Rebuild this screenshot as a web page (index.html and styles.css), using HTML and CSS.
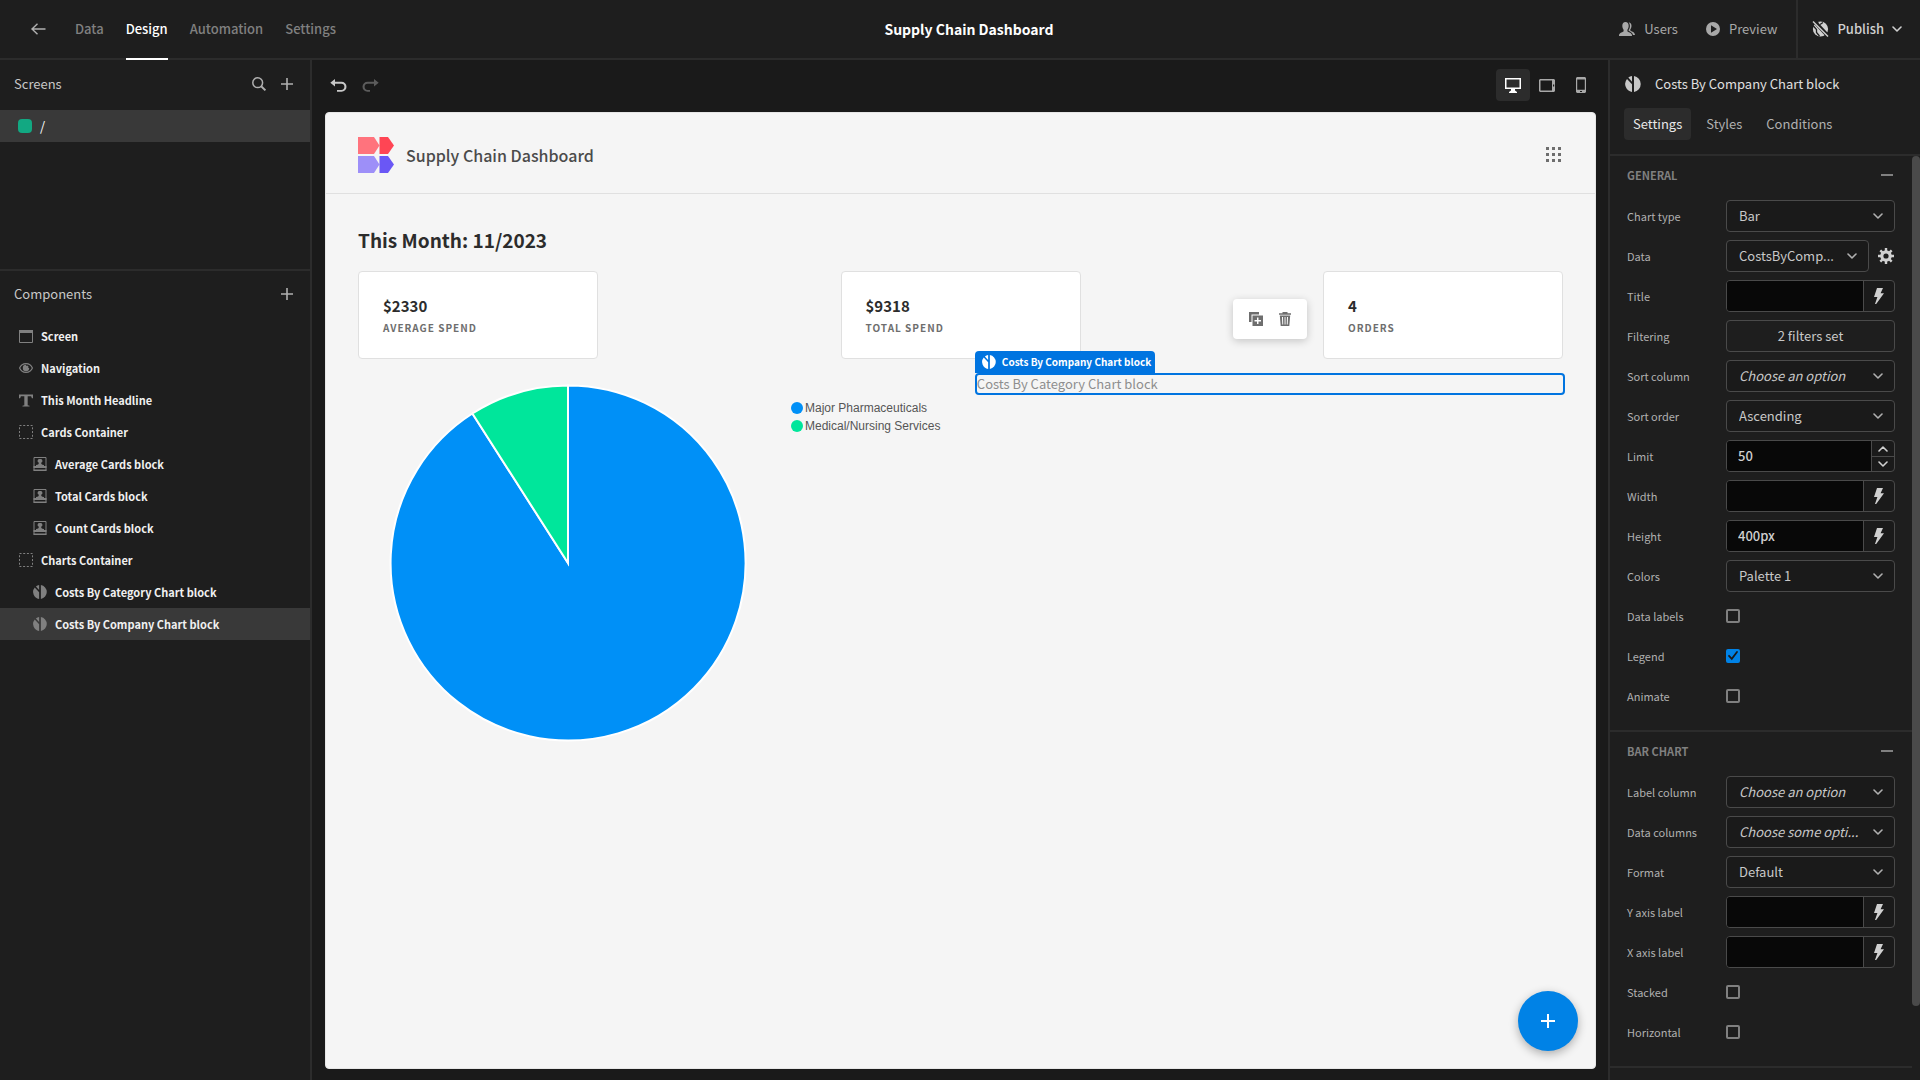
FILE: index.html
```html
<!DOCTYPE html>
<html lang="en">
<head>
<meta charset="utf-8">
<title>Supply Chain Dashboard</title>
<link rel="stylesheet" href="styles.css">
</head>
<body>
<svg class="sprite" aria-hidden="true">
  <symbol id="donut" viewBox="0 0 16 16"><path d="M9 .1A8 8 0 0 1 9 15.900Z"/><path d="M7 .1A8 8 0 0 0 3.300 1.600L7 5.800Z"/><path d="M2 2.900A8 8 0 0 0 7 15.900V8.300Z"/></symbol>
  <symbol id="chevron" viewBox="0 0 10 6"><path d="M1 1l4 4 4-4" fill="none" stroke="currentColor" stroke-width="1.600" stroke-linecap="round" stroke-linejoin="round"/></symbol>
  <symbol id="plus" viewBox="0 0 12 12"><path d="M5.200 0h1.600v5.200H12v1.600H6.800V12H5.200V6.800H0V5.200h5.200z"/></symbol>
  <symbol id="bolt" viewBox="0 0 10 16"><path d="M3 0h6L6.600 5.200H10L2.200 16H1l2.400-7H0z"/></symbol>
  <symbol id="box" viewBox="0 0 14 14"><path d="M.5.5h13v13H.5z" fill="none" stroke="currentColor" stroke-dasharray="2 1.710"/></symbol>
  <symbol id="card" viewBox="0 0 13 14"><path d="M.5.5h12v13H.5z" fill="none" stroke="currentColor"/><path d="M6.500 2a2 2 0 0 1 1.200 3.800c0 1.400.3 1.900 2.800 2.300V9.500h-8V8.100c2.500-.4 2.800-.9 2.800-2.300A2 2 0 0 1 6.500 2z"/><path d="M0 9h13v2H0zM0 12.500h13V14H0z"/></symbol>
</svg>
<div class="app">
  <header class="topbar">
    <nav class="topnav">
      <a href="#" class="back" aria-label="Back"><svg width="15" height="12" viewBox="0 0 15 12"><path d="M6.500.7L1 6l5.500 5.300M1 6h13.500" fill="none" stroke="currentColor" stroke-width="1.400"/></svg></a>
      <a href="#">Data</a>
      <a href="#" class="active">Design</a>
      <a href="#">Automation</a>
      <a href="#">Settings</a>
    </nav>
    <h1>Supply Chain Dashboard</h1>
    <div class="actions">
      <button class="action"><svg width="16" height="15" viewBox="0 0 16 15"><path d="M6.500 0c2 0 3.200 1.600 3.200 3.800 0 1.700-.6 3-1.300 3.900v1.500c0 .9 4.600 1.200 4.600 4.300v.5H0v-.5c0-3.100 4.600-3.400 4.600-4.300V7.700C3.900 6.800 3.300 5.500 3.300 3.800 3.300 1.600 4.500 0 6.500 0z"/><path d="M9.600.2c2 .2 2.900 1.700 2.900 3.500 0 1.500-.5 2.800-1.200 3.600v1.200c.2.800 4.700 1.200 4.700 4.500h-2c-.4-2.400-2.600-3-4.400-4.200V7.900c.8-1 1.300-2.400 1.300-4 0-1.400-.4-2.700-1.300-3.700z"/></svg>Users</button>
      <button class="action"><svg width="14" height="14" viewBox="0 0 14 14"><path fill-rule="evenodd" d="M7 0a7 7 0 1 0 0 14A7 7 0 0 0 7 0zM5 3.300L11 7l-6 3.700z"/></svg>Preview</button>
      <button class="publish"><svg width="17" height="16" viewBox="0 0 17 16"><circle cx="8.500" cy="8" r="7.600"/><path d="M1 4.500l3.500 4v3l3 3.500M6 1l-1 3 3 2M11 1.500l-3 2" fill="none" stroke="#1e1e1e" stroke-width="1.300"/><path d="M1.500-.5l15 16" stroke="#1e1e1e" stroke-width="4"/><path d="M1 .5l15 15" stroke="currentColor" stroke-width="1.400"/></svg>Publish<svg width="10" height="6"><use href="#chevron"/></svg></button>
    </div>
  </header>

  <aside class="sidebar">
    <section class="screens">
      <div class="side-head"><h2>Screens</h2>
        <button aria-label="Search"><svg width="14" height="14" viewBox="0 0 14 14"><g fill="none" stroke="currentColor"><circle cx="5.700" cy="5.700" r="4.900" stroke-width="1.500"/><path d="M9.200 9.200l4.200 4.200" stroke-width="2"/></g></svg></button>
        <button aria-label="Add screen"><svg width="12" height="12"><use href="#plus"/></svg></button>
      </div>
      <a href="#" class="screen-row"><span class="swatch"></span>/</a>
    </section>
    <section>
      <div class="side-head"><h2>Components</h2>
        <button aria-label="Add component"><svg width="12" height="12"><use href="#plus"/></svg></button>
      </div>
      <ul class="tree">
        <li><svg width="14" height="13" viewBox="0 0 14 13"><path d="M.5.5h13v12H.5z" fill="none" stroke="currentColor"/><path d="M0 0h14v3H0z"/></svg>Screen</li>
        <li><svg width="14" height="10" viewBox="0 0 14 10"><path d="M.6 5C3-.8 11-.8 13.400 5 11 10.800 3 10.800.6 5z" fill="none" stroke="currentColor" stroke-width="1.200"/><path d="M7 1.800A3.200 3.200 0 1 0 10.200 5H7z"/><circle cx="8" cy="4" r="1.500"/></svg>Navigation</li>
        <li><svg width="14" height="13" viewBox="0 0 15 13"><path d="M0 0h15v4h-1.200L13 2H9.300v9.500l2 .5v1H3.700v-1l2-.5V2H2l-.8 2H0z"/></svg>This Month Headline</li>
        <li><svg width="14" height="14"><use href="#box"/></svg>Cards Container</li>
        <li class="child"><svg width="14" height="14"><use href="#card"/></svg>Average Cards block</li>
        <li class="child"><svg width="14" height="14"><use href="#card"/></svg>Total Cards block</li>
        <li class="child"><svg width="14" height="14"><use href="#card"/></svg>Count Cards block</li>
        <li><svg width="14" height="14"><use href="#box"/></svg>Charts Container</li>
        <li class="child"><svg width="14" height="14"><use href="#donut"/></svg>Costs By Category Chart block</li>
        <li class="child selected"><svg width="14" height="14"><use href="#donut"/></svg>Costs By Company Chart block</li>
      </ul>
    </section>
  </aside>

  <main class="stage">
    <div class="toolbar">
      <button class="undo" aria-label="Undo"><svg width="16" height="13" viewBox="0 0 16 13"><path d="M5 0v2.700h6.500a4.500 4.500 0 0 1 0 10H7v-1.800h4.300a2.900 2.900 0 0 0 0-6.200H5v2.800L.3 3.700z"/></svg></button>
      <button class="redo" aria-label="Redo"><svg width="16" height="13" viewBox="0 0 16 13"><path d="M11 0v2.700H4.500a4.500 4.500 0 0 0 0 10H7v-1.800H4.700a2.900 2.900 0 0 1 0-6.200H11v2.800l4.700-3.800z"/></svg></button>
      <div class="devices">
        <button class="on" aria-label="Desktop"><svg width="16" height="15" viewBox="0 0 16 15"><path fill-rule="evenodd" d="M0 0h16v11h-6v1.500l2 1.500v1H4v-1l2-1.500V11H0zM1.500 1.500v8h13v-8z"/></svg></button>
        <button aria-label="Tablet"><svg width="16" height="13" viewBox="0 0 16 13"><path fill-rule="evenodd" d="M1 0h14l1 1v11l-1 1H1l-1-1V1zM1.500 1.500v10H13v-10zM14 5.500v2h1.200v-2z"/></svg></button>
        <button aria-label="Mobile"><svg width="10" height="16" viewBox="0 0 10 16"><path fill-rule="evenodd" d="M1 0h8l1 1v14l-1 1H1l-1-1V1zM1.200 2.500v10.300h7.600V2.500zM4 14h2v1H4z"/></svg></button>
      </div>
    </div>
    <div class="canvas">
      <header class="app-head">
        <svg width="36" height="36" viewBox="0 0 36 36"><path fill="#ff737d" d="M0 0h16l5.500 8.500L16 17H0z"/><path fill="#ff4554" d="M21.500 0H30l6 8.500-6 8.500h-8.500z"/><path fill="#9d8ff8" d="M0 19h16l5.500 8.500L16 36H0z"/><path fill="#6a57f5" d="M21.500 19H30l6 8.500-6 8.500h-8.500z"/></svg>
        <h2>Supply Chain Dashboard</h2>
        <button aria-label="Apps"><svg width="15" height="15" viewBox="0 0 15 15"><path d="M0 0h3v3H0zM6 0h3v3H6zM12 0h3v3h-3zM0 6h3v3H0zM6 6h3v3H6zM12 6h3v3h-3zM0 12h3v3H0zM6 12h3v3H6zM12 12h3v3h-3z"/></svg></button>
      </header>
      <div class="page">
        <h3>This Month: 11/2023</h3>
        <div class="cards">
          <div class="card"><strong>$2330</strong><span>AVERAGE SPEND</span></div>
          <div class="card"><strong>$9318</strong><span>TOTAL SPEND</span></div>
          <div class="card"><strong>4</strong><span>ORDERS</span></div>
        </div>
        <div class="charts">
          <div class="chart">
            <svg width="420" height="370" viewBox="0 0 420 370"><g stroke="#fff" stroke-width="2"><path fill="#0090f7" d="M210 188V10.500A177.500 177.500 0 1 1 114.400 38.500Z"/><path fill="#00e69b" d="M210 188L114.400 38.500A177.500 177.500 0 0 1 210 10.500Z"/></g></svg>
            <ul class="legend"><li class="blue">Major Pharmaceuticals</li><li class="green">Medical/Nursing Services</li></ul>
          </div>
          <div class="placeholder">Costs By Category Chart block
            <div class="tag"><svg width="14" height="14"><use href="#donut"/></svg>Costs By Company Chart block</div>
            <div class="tools">
              <button aria-label="Duplicate"><svg width="14" height="14" viewBox="0 0 14 14"><path d="M0 0h10v2.500H2.500V10H0z"/><path fill-rule="evenodd" d="M3.500 3.500H14V14H3.500zM8 5.500V8H5.500v1.500H8V12h1.500V9.500H12V8H9.500V5.500z"/></svg></button>
              <button aria-label="Delete"><svg width="12" height="14" viewBox="0 0 12 14"><path d="M3.500 0h5v1.300H12v1.500H0V1.300h3.500z"/><path fill-rule="evenodd" d="M.8 3.500h10.400L10.300 14H1.700zM3 5l.3 7.500h.9L4 5zM5.600 5v7.500h.9V5zM8 5l-.2 7.500h.9L9 5z"/></svg></button>
            </div>
          </div>
        </div>
      </div>
      <button class="fab" aria-label="Add"><svg width="14" height="14" viewBox="0 0 14 14"><path d="M7 0v14M0 7h14" stroke="currentColor" stroke-width="2"/></svg></button>
    </div>
  </main>

  <aside class="panel">
    <div class="panel-head">
      <h2><svg width="16" height="16"><use href="#donut"/></svg>Costs By Company Chart block</h2>
      <nav class="tabs"><button class="on">Settings</button><button>Styles</button><button>Conditions</button></nav>
    </div>
    <div class="scroll">
      <section class="group">
        <h3>GENERAL<button aria-label="Collapse General"></button></h3>
        <div class="field"><label for="f1">Chart type</label><div class="select"><select id="f1"><option>Bar</option></select><svg width="10" height="6"><use href="#chevron"/></svg></div></div>
        <div class="field"><label for="f2">Data</label><div class="with-gear"><div class="select"><select id="f2"><option>CostsByComp...</option></select><svg width="10" height="6"><use href="#chevron"/></svg></div>
          <button class="gear" aria-label="Configure data"><svg width="16" height="16" viewBox="0 0 16 16"><path fill="none" stroke="currentColor" stroke-width="2.400" d="M8 0v4M8 12v4M0 8h4M12 8h4M2.300 2.300l2.800 2.800M10.900 10.900l2.800 2.800M2.300 13.700l2.800-2.800M10.900 5.100l2.800-2.800"/><circle cx="8" cy="8" r="4.200" fill="none" stroke="currentColor" stroke-width="3.200"/></svg></button></div></div>
        <div class="field"><label for="f3">Title</label><div class="bind"><input id="f3" type="text"><button aria-label="Bind title"><svg width="10" height="16"><use href="#bolt"/></svg></button></div></div>
        <div class="field"><span>Filtering</span><button class="wide">2 filters set</button></div>
        <div class="field"><label for="f4">Sort column</label><div class="select empty"><select id="f4"><option>Choose an option</option></select><svg width="10" height="6"><use href="#chevron"/></svg></div></div>
        <div class="field"><label for="f5">Sort order</label><div class="select"><select id="f5"><option>Ascending</option></select><svg width="10" height="6"><use href="#chevron"/></svg></div></div>
        <div class="field"><label for="f6">Limit</label><div class="bind stepper"><input id="f6" type="text" value="50"><div class="steps"><button aria-label="Increase"><svg class="up" width="10" height="6"><use href="#chevron"/></svg></button><button aria-label="Decrease"><svg width="10" height="6"><use href="#chevron"/></svg></button></div></div></div>
        <div class="field"><label for="f7">Width</label><div class="bind"><input id="f7" type="text"><button aria-label="Bind width"><svg width="10" height="16"><use href="#bolt"/></svg></button></div></div>
        <div class="field"><label for="f8">Height</label><div class="bind"><input id="f8" type="text" value="400px"><button aria-label="Bind height"><svg width="10" height="16"><use href="#bolt"/></svg></button></div></div>
        <div class="field"><label for="f9">Colors</label><div class="select"><select id="f9"><option>Palette 1</option></select><svg width="10" height="6"><use href="#chevron"/></svg></div></div>
        <div class="field"><label for="f10">Data labels</label><input id="f10" type="checkbox"></div>
        <div class="field"><label for="f11">Legend</label><span class="check"><input id="f11" type="checkbox" checked><svg width="10" height="9" viewBox="0 0 10 9"><path d="M1 4.800l2.800 3L9 1" fill="none" stroke="#1a1a1a" stroke-width="1.800" stroke-linecap="round"/></svg></span></div>
        <div class="field"><label for="f12">Animate</label><input id="f12" type="checkbox"></div>
      </section>
      <section class="group">
        <h3>BAR CHART<button aria-label="Collapse Bar chart"></button></h3>
        <div class="field"><label for="g1">Label column</label><div class="select empty"><select id="g1"><option>Choose an option</option></select><svg width="10" height="6"><use href="#chevron"/></svg></div></div>
        <div class="field"><label for="g2">Data columns</label><div class="select empty"><select id="g2"><option>Choose some opti...</option></select><svg width="10" height="6"><use href="#chevron"/></svg></div></div>
        <div class="field"><label for="g3">Format</label><div class="select"><select id="g3"><option>Default</option></select><svg width="10" height="6"><use href="#chevron"/></svg></div></div>
        <div class="field"><label for="g4">Y axis label</label><div class="bind"><input id="g4" type="text"><button aria-label="Bind Y axis label"><svg width="10" height="16"><use href="#bolt"/></svg></button></div></div>
        <div class="field"><label for="g5">X axis label</label><div class="bind"><input id="g5" type="text"><button aria-label="Bind X axis label"><svg width="10" height="16"><use href="#bolt"/></svg></button></div></div>
        <div class="field"><label for="g6">Stacked</label><input id="g6" type="checkbox"></div>
        <div class="field"><label for="g7">Horizontal</label><input id="g7" type="checkbox"></div>
      </section>
      <div class="thumb"></div>
    </div>
  </aside>
</div>
</body>
</html>
```
FILE: styles.css
```css
*, *::before, *::after { box-sizing: border-box; }
body {
  margin: 0;
  background: #1a1a1a;
  color: #c8c8c8;
  font-family: "Noto Sans CJK KR", "Noto Sans", sans-serif;
  font-size: 13px;
  line-height: 20px;
}
h1, h2, h3, ul { margin: 0; padding: 0; font-size: inherit; font-weight: 500; }
li { list-style: none; }
a { color: inherit; text-decoration: none; }
button, input, select { font: inherit; color: inherit; background: none; border: 0; padding: 0; margin: 0; }
svg { fill: currentColor; flex: none; display: block; overflow: visible; }
.sprite { position: absolute; width: 0; height: 0; }

.app {
  display: grid;
  grid-template: 60px minmax(0, 1fr) / 312px minmax(0, 1fr) 312px;
  height: 100vh;
  overflow: hidden;
}

/* Top bar */
.topbar {
  grid-column: 1 / -1;
  display: grid;
  grid-template-columns: 1fr auto 1fr;
  background: #1e1e1e;
  border-bottom: 2px solid #2c2c2c;
}
.topbar h1 { align-self: center; padding-left: 18px; color: #fff; font-size: 14px; font-weight: 700; }
.topnav { display: flex; gap: 22px; padding-left: 31px; font-weight: 500; color: #808080; }
.topnav a { display: flex; align-items: center; margin-bottom: -2px; padding-bottom: 2px; }
.topnav .back { color: #b0b0b0; margin-right: 7px; }
.topnav .active { color: #fff; border-bottom: 2px solid #fff; padding-bottom: 0; }
.actions { display: flex; justify-content: flex-end; color: #a8a8a8; }
.action { display: flex; align-items: center; gap: 9px; margin-right: 28px; }
.action + .action { margin-right: 19px; }
.publish { display: flex; align-items: center; gap: 8px; padding: 0 18px 0 14px; border-left: 2px solid #2c2c2c; color: #d0d0d0; font-weight: 500; }

/* Left sidebar */
.sidebar { background: #1e1e1e; border-right: 2px solid #2c2c2c; }
.side-head { display: flex; align-items: center; gap: 15px; height: 49px; padding: 0 17px 3px 14px; }
.side-head h2 { flex: 1; font-weight: 400; }
.side-head button { color: #b0b0b0; }
.screens { height: 211px; border-bottom: 2px solid #2c2c2c; }
.screens .side-head { height: 50px; padding-bottom: 2px; }
.screen-row { display: flex; align-items: center; gap: 8px; height: 32px; padding-left: 18px; background: #393939; color: #fff; }
.swatch { width: 14px; height: 14px; border-radius: 4px; background: #12a882; }
.tree li { display: flex; align-items: center; gap: 8px; height: 32px; padding-left: 19px; color: #f0f0f0; font-size: 11px; font-weight: 700; }
.tree .child { padding-left: 33px; }
.tree .selected { background: #393939; }
.tree svg { color: #808080; }

/* Stage */
.stage { display: flex; flex-direction: column; padding: 0 12px 11px 13px; }
.toolbar { display: flex; align-items: center; gap: 17px; height: 52px; padding: 0 0 2px 5px; }
.redo { color: #5c5c5c; }
.devices { display: flex; margin-left: auto; margin-right: -2px; }
.devices button { display: flex; align-items: center; justify-content: center; width: 34px; height: 32px; border-radius: 4px; color: #a8a8a8; }
.devices .on { background: #2c2c2c; color: #fff; }
.canvas { position: relative; flex: 1; background: #f5f5f5; border: 1px solid #e6e6e6; border-radius: 4px; color: #2c2c2c; }
.app-head { display: flex; align-items: center; gap: 12px; height: 81px; padding: 3px 34px 0 32px; border-bottom: 1px solid #e0e0e0; }
.app-head h2 { flex: 1; font-size: 16px; font-weight: 500; color: #4b4b4b; }
.app-head button { color: #6e6e6e; }
.page { padding: 32px; }
.page h3 { font-size: 19px; line-height: 28px; font-weight: 700; margin-bottom: 17px; }
.cards { display: flex; justify-content: space-between; margin-bottom: 16px; }
.card { display: flex; flex-direction: column; justify-content: center; gap: 2px; width: 240px; height: 88px; padding: 4px 0 0 24px; background: #fff; border: 1px solid #e0e0e0; border-radius: 4px; }
.card strong { font-size: 15px; font-weight: 700; }
.card span { font-size: 10px; font-weight: 700; letter-spacing: 1px; color: #6e6e6e; }
.charts { display: grid; grid-template-columns: 36fr 35fr; gap: 16px; align-items: start; }
.chart { display: flex; gap: 13px; }
.legend { padding-top: 24px; font: 12px/18px "Liberation Sans", Arial, sans-serif; color: #555; }
.legend li { display: flex; align-items: center; gap: 2px; white-space: nowrap; }
.legend li::before { content: ""; width: 12px; height: 12px; border-radius: 50%; background: #0090f7; }
.legend .green::before { background: #00e69b; }
.placeholder { position: relative; height: 18px; line-height: 18px; color: #8e8e8e; outline: 2px solid #0074e0; border-radius: 2px; }
.tag { position: absolute; left: -2px; bottom: 20px; display: flex; align-items: center; gap: 6px; height: 22px; padding: 0 4px 0 7px; border-radius: 4px 4px 0 0; background: #0074e0; color: #fff; font-size: 10px; font-weight: 700; white-space: nowrap; }
.tools { position: absolute; right: 256px; bottom: 54px; display: flex; align-items: center; justify-content: center; gap: 16px; width: 74px; height: 40px; background: #fff; border-radius: 4px; color: #6e6e6e; box-shadow: 0 2px 8px rgba(0, 0, 0, .2); }
.fab { position: absolute; right: 17px; bottom: 17px; display: flex; align-items: center; justify-content: center; width: 60px; height: 60px; border-radius: 50%; background: #0082e6; color: #fff; box-shadow: 0 3px 10px rgba(0, 0, 0, .3); }

/* Settings panel */
.panel { display: flex; flex-direction: column; min-height: 0; background: #1e1e1e; border-left: 2px solid #2c2c2c; }
.panel-head { height: 96px; padding: 14px; border-bottom: 2px solid #2c2c2c; }
.panel-head h2 { display: flex; align-items: center; gap: 14px; height: 20px; margin-bottom: 14px; font-weight: 400; color: #e0e0e0; }
.panel-head h2 svg { margin-left: 1px; color: #c8c8c8; }
.tabs { display: flex; gap: 6px; color: #b0b0b0; }
.tabs button { height: 32px; padding: 0 9px; border-radius: 4px; }
.tabs .on { background: #2c2c2c; color: #e8e8e8; }
.scroll { position: relative; flex: 1; overflow: hidden; padding-right: 8px; }
.group { display: flex; flex-direction: column; gap: 8px; padding: 0 17px 18px; border-bottom: 2px solid #2c2c2c; }
.group h3 { display: flex; align-items: center; justify-content: space-between; height: 36px; padding-top: 2px; font-size: 11px; font-weight: 700; color: #808080; }
.group h3 button { width: 12px; height: 2px; margin-right: 2px; background: #808080; }
.field { display: grid; grid-template-columns: 99px minmax(0, 1fr); align-items: center; height: 32px; font-size: 11px; color: #b0b0b0; }
.select { position: relative; }
.select select { display: block; width: 100%; height: 32px; padding: 0 24px 0 12px; appearance: none; border: 1px solid #4a4a4a; border-radius: 4px; background: #1a1a1a; color: #c8c8c8; font-size: 13px; text-overflow: ellipsis; }
.select.empty select { font-style: italic; }
.select svg { position: absolute; right: 12px; top: 13px; pointer-events: none; }
.with-gear { display: grid; grid-template-columns: minmax(0, 1fr) 16px; gap: 9px; align-items: center; margin-right: 1px; }
.gear { color: #d0d0d0; }
.wide { height: 32px; border: 1px solid #4a4a4a; border-radius: 4px; color: #c8c8c8; font-size: 13px; }
.bind { display: grid; grid-template-columns: minmax(0, 1fr) 31px; height: 32px; border: 1px solid #4a4a4a; border-radius: 4px; overflow: hidden; background: #1a1a1a; color: #d0d0d0; }
.bind input { min-width: 0; padding-left: 11px; background: #080808; font-size: 13px; font-weight: 500; }
.bind > button { display: flex; align-items: center; justify-content: center; border-left: 1px solid #4a4a4a; }
.stepper { grid-template-columns: minmax(0, 1fr) 23px; }
.steps { display: grid; grid-template-rows: 1fr 1fr; border-left: 1px solid #4a4a4a; }
.steps button { display: flex; align-items: center; justify-content: center; }
.steps button + button { border-top: 1px solid #4a4a4a; }
.up { transform: rotate(180deg); }
input[type="checkbox"] { appearance: none; display: block; width: 14px; height: 14px; border: 2px solid #808080; border-radius: 2px; }
input[type="checkbox"]:checked { background: #0082e6; border-color: #0082e6; }
.check { position: relative; }
.check svg { position: absolute; left: 2px; top: 2px; pointer-events: none; }
.thumb { position: absolute; right: 0; top: 0; width: 8px; height: 92%; border-radius: 4px; background: #4a4a4a; }
```
